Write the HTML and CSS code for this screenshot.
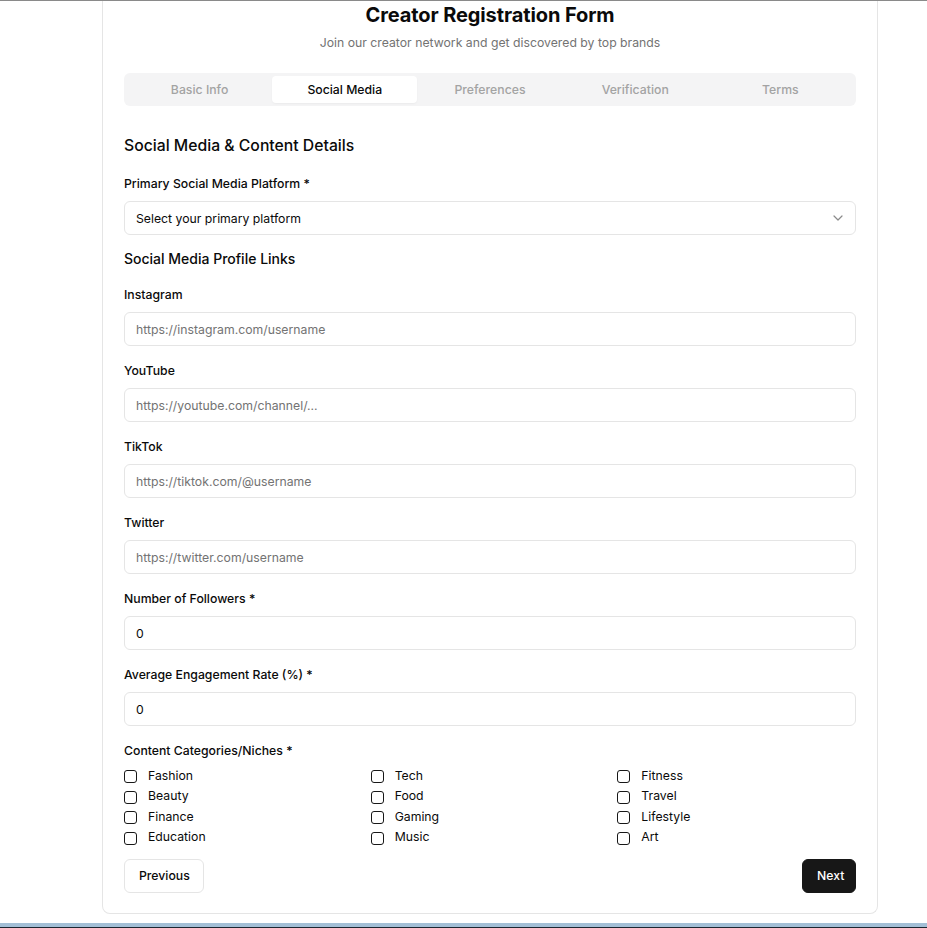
FILE: index.html
```html
<!DOCTYPE html>
<html lang="en">
<head>
<meta charset="utf-8">
<title>Creator Registration Form</title>
<link rel="stylesheet" href="styles.css">
</head>
<body>
<div class="topline"></div>
<main class="card">
  <h1 class="title">Creator Registration Form</h1>
  <p class="subtitle">Join our creator network and get discovered by top brands</p>
  <nav class="tabs">
    <div class="tab">Basic Info</div>
    <div class="tab active">Social Media</div>
    <div class="tab">Preferences</div>
    <div class="tab">Verification</div>
    <div class="tab">Terms</div>
  </nav>
  <h2 class="section-title">Social Media &amp; Content Details</h2>
  <div class="field first">
    <label class="label">Primary Social Media Platform *</label>
    <div class="select">
      <span>Select your primary platform</span>
      <svg class="chev" width="10" height="6" viewBox="0 0 10 6"><path d="M1 1l4 4 4-4" fill="none" stroke="#8a8a8a" stroke-width="1.2" stroke-linecap="round" stroke-linejoin="round"/></svg>
    </div>
  </div>
  <h3 class="sub-title">Social Media Profile Links</h3>
  <div class="field">
    <label class="label">Instagram</label>
    <div class="input placeholder">https://instagram.com/username</div>
  </div>
  <div class="field">
    <label class="label">YouTube</label>
    <div class="input placeholder">https://youtube.com/channel/...</div>
  </div>
  <div class="field">
    <label class="label">TikTok</label>
    <div class="input placeholder">https://tiktok.com/@username</div>
  </div>
  <div class="field">
    <label class="label">Twitter</label>
    <div class="input placeholder">https://twitter.com/username</div>
  </div>
  <div class="field">
    <label class="label">Number of Followers *</label>
    <div class="input">0</div>
  </div>
  <div class="field">
    <label class="label">Average Engagement Rate (%) *</label>
    <div class="input">0</div>
  </div>
  <div class="field cats">
    <label class="label">Content Categories/Niches *</label>
    <div class="grid">
      <label class="check"><span class="box"></span>Fashion</label>
      <label class="check"><span class="box"></span>Tech</label>
      <label class="check"><span class="box"></span>Fitness</label>
      <label class="check"><span class="box"></span>Beauty</label>
      <label class="check"><span class="box"></span>Food</label>
      <label class="check"><span class="box"></span>Travel</label>
      <label class="check"><span class="box"></span>Finance</label>
      <label class="check"><span class="box"></span>Gaming</label>
      <label class="check"><span class="box"></span>Lifestyle</label>
      <label class="check"><span class="box"></span>Education</label>
      <label class="check"><span class="box"></span>Music</label>
      <label class="check"><span class="box"></span>Art</label>
    </div>
  </div>
  <div class="actions">
    <button class="btn outline">Previous</button>
    <button class="btn primary">Next</button>
  </div>
</main>
<div class="bottom-strip"></div>
</body>
</html>
```
FILE: styles.css
```css
* { box-sizing: border-box; }
html, body { margin: 0; padding: 0; }
body {
  height: 928px;
  overflow: hidden;
  background: #fff;
  font-family: Inter, "Liberation Sans", sans-serif;
  color: #0a0a0a;
  display: flex;
  flex-direction: column;
}
.topline { height: 1px; background: #8a8a8a; flex: none; }
.card {
  flex: none;
  width: 776px;
  margin-left: 102px;
  height: 913px;
  border: 1px solid #e5e5e5;
  border-top: none;
  border-radius: 0 0 8px 8px;
  padding: 0 21px 20px;
  display: flex;
  flex-direction: column;
}
.title {
  margin: 0;
  text-align: center;
  font-size: 20px;
  line-height: 28px;
  font-weight: 700;
  letter-spacing: -0.1px;
}
.subtitle {
  margin: 4px 0 0;
  text-align: center;
  font-size: 12.25px;
  line-height: 20px;
  color: #737373;
}
.tabs {
  margin-top: 20px;
  height: 33px;
  background: #f4f4f5;
  border-radius: 6px;
  padding: 3px;
  display: grid;
  grid-template-columns: repeat(5, 1fr);
}
.tab {
  display: flex;
  align-items: center;
  justify-content: center;
  font-size: 12.25px;
  font-weight: 500;
  color: #a3a3a3;
  border-radius: 4px;
}
.tab.active { background: #fff; color: #0a0a0a; box-shadow: 0 1px 2px rgba(0,0,0,0.04); }
.section-title {
  margin: 28px 0 0;
  font-size: 15.75px;
  line-height: 24px;
  font-weight: 500;
}
.field { display: flex; flex-direction: column; gap: 7px; margin-top: 15px; }
.field.first { margin-top: 16px; }
.label {
  font-size: 12.25px;
  line-height: 20px;
  font-weight: 500;
  color: #0a0a0a;
}
.select, .input {
  height: 34px;
  border: 1px solid #e5e5e5;
  border-radius: 6px;
  padding: 0 11px;
  display: flex;
  align-items: center;
  font-size: 12.25px;
  color: #0a0a0a;
}
.select { justify-content: space-between; padding-right: 12px; }
.placeholder { color: #737373; }
.sub-title {
  margin: 14px 0 0;
  font-size: 14px;
  line-height: 20px;
  font-weight: 500;
}
.sub-title + .field { margin-top: 16px; }
.cats { gap: 6px; }
.grid {
  display: grid;
  grid-template-columns: repeat(3, 1fr);
  column-gap: 8px;
  row-gap: 4.67px;
}
.check {
  display: flex;
  align-items: center;
  gap: 11px;
  height: 16px;
  font-size: 12.25px;
  color: #0a0a0a;
}
.box {
  width: 13px;
  height: 13px;
  border: 1px solid #171717;
  border-radius: 3px;
  flex: none;
  margin-top: 3px;
}
.actions {
  margin-top: 14px;
  display: flex;
  justify-content: space-between;
}
.btn {
  height: 34px;
  border-radius: 6px;
  font-family: inherit;
  font-size: 12.25px;
  font-weight: 500;
  padding: 0 14px;
}
.btn.outline { background: #fff; border: 1px solid #e5e5e5; color: #0a0a0a; width: 80px; }
.btn.primary { background: #171717; border: 1px solid #171717; color: #fff; width: 54px; }
.bottom-strip {
  margin-top: auto;
  height: 5px;
  background: #a3bfd6;
  border-bottom: 1px solid #1c2630;
  flex: none;
}
```
